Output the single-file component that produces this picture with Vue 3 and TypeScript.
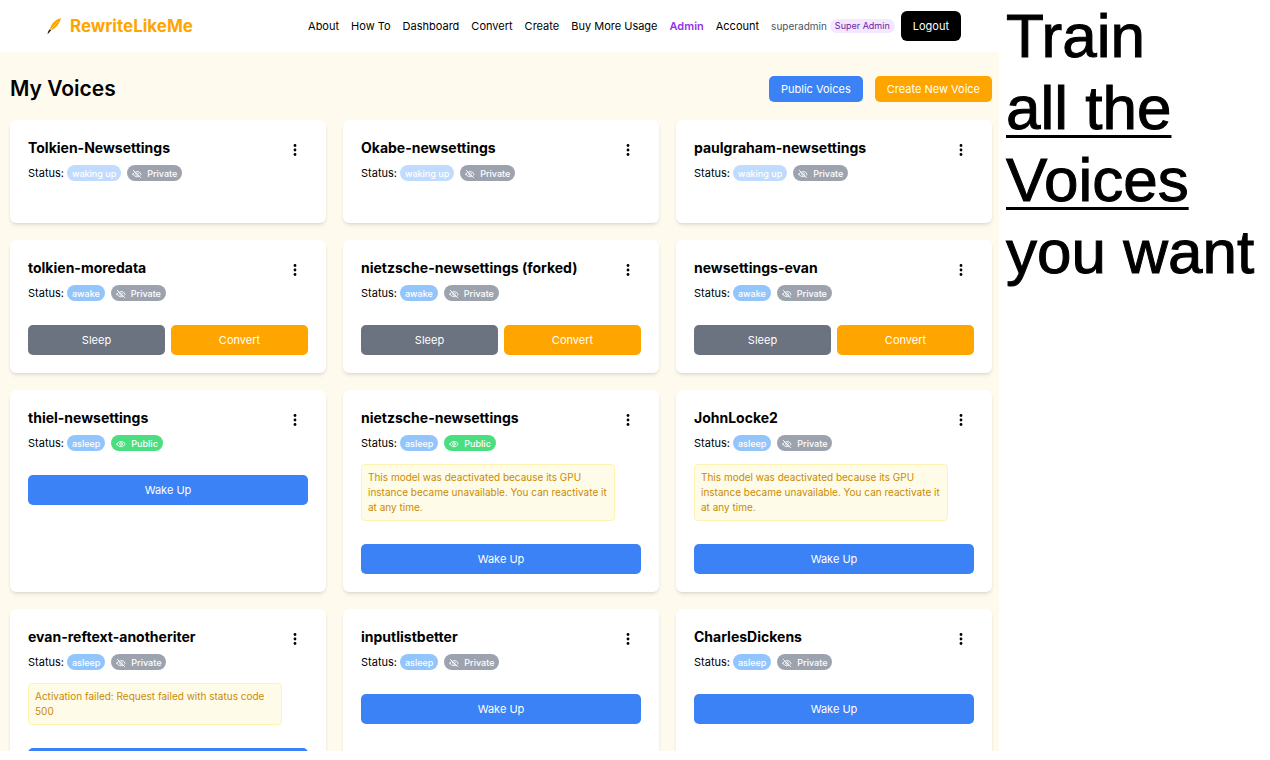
<script setup lang="ts">
interface Voice {
  name: string
  status: 'waking up' | 'awake' | 'asleep'
  isPublic?: boolean
  notice?: string
}

const links: string[] = ['About', 'How To', 'Dashboard', 'Convert', 'Create', 'Buy More Usage', 'Admin', 'Account']

const gpuNotice = 'This model was deactivated because its GPU instance became unavailable. You can reactivate it at any time.'

const voices: Voice[] = [
  { name: 'Tolkien-Newsettings', status: 'waking up' },
  { name: 'Okabe-newsettings', status: 'waking up' },
  { name: 'paulgraham-newsettings', status: 'waking up' },
  { name: 'tolkien-moredata', status: 'awake' },
  { name: 'nietzsche-newsettings (forked)', status: 'awake' },
  { name: 'newsettings-evan', status: 'awake' },
  { name: 'thiel-newsettings', status: 'asleep', isPublic: true },
  { name: 'nietzsche-newsettings', status: 'asleep', isPublic: true, notice: gpuNotice },
  { name: 'JohnLocke2', status: 'asleep', notice: gpuNotice },
  { name: 'evan-reftext-anotheriter', status: 'asleep', notice: 'Activation failed: Request failed with status code 500' },
  { name: 'inputlistbetter', status: 'asleep' },
  { name: 'CharlesDickens', status: 'asleep' },
]
</script>

<template>
  <div class="page">
    <div class="app">
      <header class="topbar">
        <a class="brand" href="#">
          <svg class="quill" viewBox="0 0 16 18" aria-hidden="true">
            <path d="M15 1C9.500 2.500 5 6.500 4 12.300L5.600 13C10.500 11 13.600 6.500 15 1Z" fill="#ffa500" />
            <path d="M12 4.500 4.800 12.600" stroke="#fff" stroke-width=".4" fill="none" />
            <path d="M3.600 12.200 5.200 13.300 3.300 15.600 1.500 17.300 2.100 14.600Z" fill="#222b38" />
          </svg>
          <span>RewriteLikeMe</span>
        </a>
        <nav class="nav">
          <a v-for="link in links" :key="link" href="#" :class="{ admin: link === 'Admin' }">{{ link }}</a>
          <div class="user">
            <span class="username">superadmin</span>
            <span class="role">Super Admin</span>
            <button class="logout" type="button">Logout</button>
          </div>
        </nav>
      </header>

      <main class="content">
        <div class="heading">
          <h1>My Voices</h1>
          <div class="heading-actions">
            <button class="btn blue" type="button">Public Voices</button>
            <button class="btn orange" type="button">Create New Voice</button>
          </div>
        </div>

        <div class="grid">
          <article v-for="voice in voices" :key="voice.name" class="card">
            <div class="card-top">
              <div class="info">
                <h2>{{ voice.name }}</h2>
                <div class="status">
                  <span class="label">Status:</span>
                  <span class="pill" :class="voice.status === 'waking up' ? 'waking' : 'steady'">{{ voice.status }}</span>
                  <span class="pill visibility" :class="voice.isPublic ? 'public' : 'private'">
                    <svg viewBox="0 0 24 24" aria-hidden="true">
                      <path d="M2 12.300a11 11 0 0 1 20 0 11 11 0 0 1-20 0Z" />
                      <circle cx="12" cy="12" r="3.200" />
                      <path v-if="!voice.isPublic" class="mask" d="M5 2 22 19" />
                      <path v-if="!voice.isPublic" d="M3 3 21 21" />
                    </svg>
                    {{ voice.isPublic ? 'Public' : 'Private' }}
                  </span>
                </div>
                <p v-if="voice.notice" class="notice">{{ voice.notice }}</p>
              </div>
              <button class="menu" type="button" :aria-label="`Options for ${voice.name}`">
                <svg viewBox="0 0 4 14" aria-hidden="true">
                  <circle cx="2" cy="2.500" r="1.400" />
                  <circle cx="2" cy="7" r="1.400" />
                  <circle cx="2" cy="11.500" r="1.400" />
                </svg>
              </button>
            </div>
            <div class="actions">
              <template v-if="voice.status === 'awake'">
                <button class="btn gray" type="button">Sleep</button>
                <button class="btn orange" type="button">Convert</button>
              </template>
              <button v-else-if="voice.status === 'asleep'" class="btn blue" type="button">Wake Up</button>
            </div>
          </article>
        </div>
      </main>
    </div>

    <aside class="promo">
      <p>Train<br /><u>all the<br />Voices</u><br />you want</p>
    </aside>
  </div>
</template>

<style>
body {
  background: #fff;
}
</style>

<style scoped>
.page {
  display: grid;
  grid-template-columns: minmax(0, 1fr) 271px;
  height: calc(100vh - 9px);
  font-family: Inter, 'Liberation Sans', sans-serif;
  font-size: 11px;
  color: #000;
}

.page * {
  box-sizing: border-box;
}

.app {
  display: flex;
  flex-direction: column;
  min-height: 0;
  overflow: hidden;
  background: #fffaee;
}

a {
  color: inherit;
  text-decoration: none;
}

h1,
h2,
p {
  margin: 0;
}

button {
  border: 0;
  padding: 0;
  font: inherit;
  cursor: pointer;
}

.topbar {
  display: flex;
  flex: none;
  align-items: center;
  justify-content: space-between;
  height: 52px;
  padding: 0 38px 0 46px;
  background: #fff;
}

.brand {
  display: flex;
  align-items: center;
  gap: 8px;
  font-size: 17px;
  font-weight: 700;
  color: #ffa500;
}

.quill {
  width: 16px;
  height: 18px;
}

.nav {
  display: flex;
  align-items: center;
  gap: 12px;
  white-space: nowrap;
}

.admin {
  font-weight: 600;
  color: #9333ea;
}

.user {
  display: flex;
  align-items: center;
}

.username {
  margin-right: 3px;
  font-size: 10px;
  color: #4b5563;
}

.role {
  margin-right: 6px;
  padding: 0 5px;
  border-radius: 7px;
  background: #f3e8ff;
  font-size: 9px;
  line-height: 14px;
  color: #6b21a8;
}

.logout {
  height: 30px;
  padding: 0 12px;
  border-radius: 6px;
  background: #000;
  color: #fff;
}

.content {
  padding: 24px 7px 24px 10px;
}

.heading {
  display: flex;
  align-items: center;
  justify-content: space-between;
  margin-bottom: 18px;
}

.heading h1 {
  font-size: 21px;
  font-weight: 600;
  line-height: 26px;
}

.heading-actions {
  display: flex;
  gap: 12px;
}

.heading-actions .btn {
  height: 26px;
  padding: 0 12px;
}

.btn {
  border-radius: 5px;
  color: #fff;
}

.blue {
  background: #3b82f6;
}

.orange {
  background: #ffa500;
}

.gray {
  background: #6b7280;
}

.grid {
  display: grid;
  grid-template-columns: repeat(3, minmax(0, 1fr));
  gap: 17px;
}

.card {
  padding: 18px;
  border-radius: 6px;
  background: #fff;
  box-shadow: 0 3px 4px -1px rgb(0 0 0 / 10%), 0 1px 3px -1px rgb(0 0 0 / 10%);
}

.card-top {
  display: flex;
  align-items: flex-start;
}

.info {
  flex: 1;
  min-width: 0;
}

.info h2 {
  margin-bottom: 6px;
  font-size: 14px;
  font-weight: 700;
  line-height: 20px;
}

.status {
  display: flex;
  align-items: center;
  height: 18px;
}

.label {
  margin-right: 3px;
}

.pill {
  display: flex;
  align-items: center;
  height: 16px;
  padding: 0 5px;
  border-radius: 8px;
  font-size: 9px;
  font-weight: 500;
  color: #fff;
}

.waking {
  background: #bfdbfe;
}

.steady {
  background: #93c5fd;
}

.visibility {
  gap: 5px;
  margin-left: 6px;
}

.private {
  background: #9ca3af;
}

.public {
  background: #4ade80;
}

.pill svg {
  width: 10px;
  height: 10px;
  margin-top: 2px;
  fill: none;
  stroke: #fff;
  stroke-width: 2;
  stroke-linecap: round;
}

.pill .mask {
  stroke: #9ca3af;
}

.notice {
  margin-top: 12px;
  padding: 5px 6px;
  border: 1px solid #fef3b0;
  border-radius: 4px;
  background: #fefce8;
  font-size: 10px;
  line-height: 15px;
  color: #ca8a04;
}

.menu {
  display: flex;
  align-items: center;
  justify-content: center;
  width: 26px;
  height: 24px;
  background: none;
}

.menu svg {
  width: 4px;
  height: 14px;
}

.actions {
  display: flex;
  gap: 6px;
  margin-top: 23px;
}

.actions .btn {
  flex: 1;
  height: 30px;
}

.promo {
  padding-left: 7px;
  font-family: 'Liberation Sans', Arial, sans-serif;
  font-size: 62px;
  line-height: 72px;
  white-space: nowrap;
  -webkit-text-stroke: 1px #000;
}

.promo u {
  text-decoration-thickness: 3px;
  text-underline-offset: 6px;
  text-decoration-skip-ink: none;
}
</style>
